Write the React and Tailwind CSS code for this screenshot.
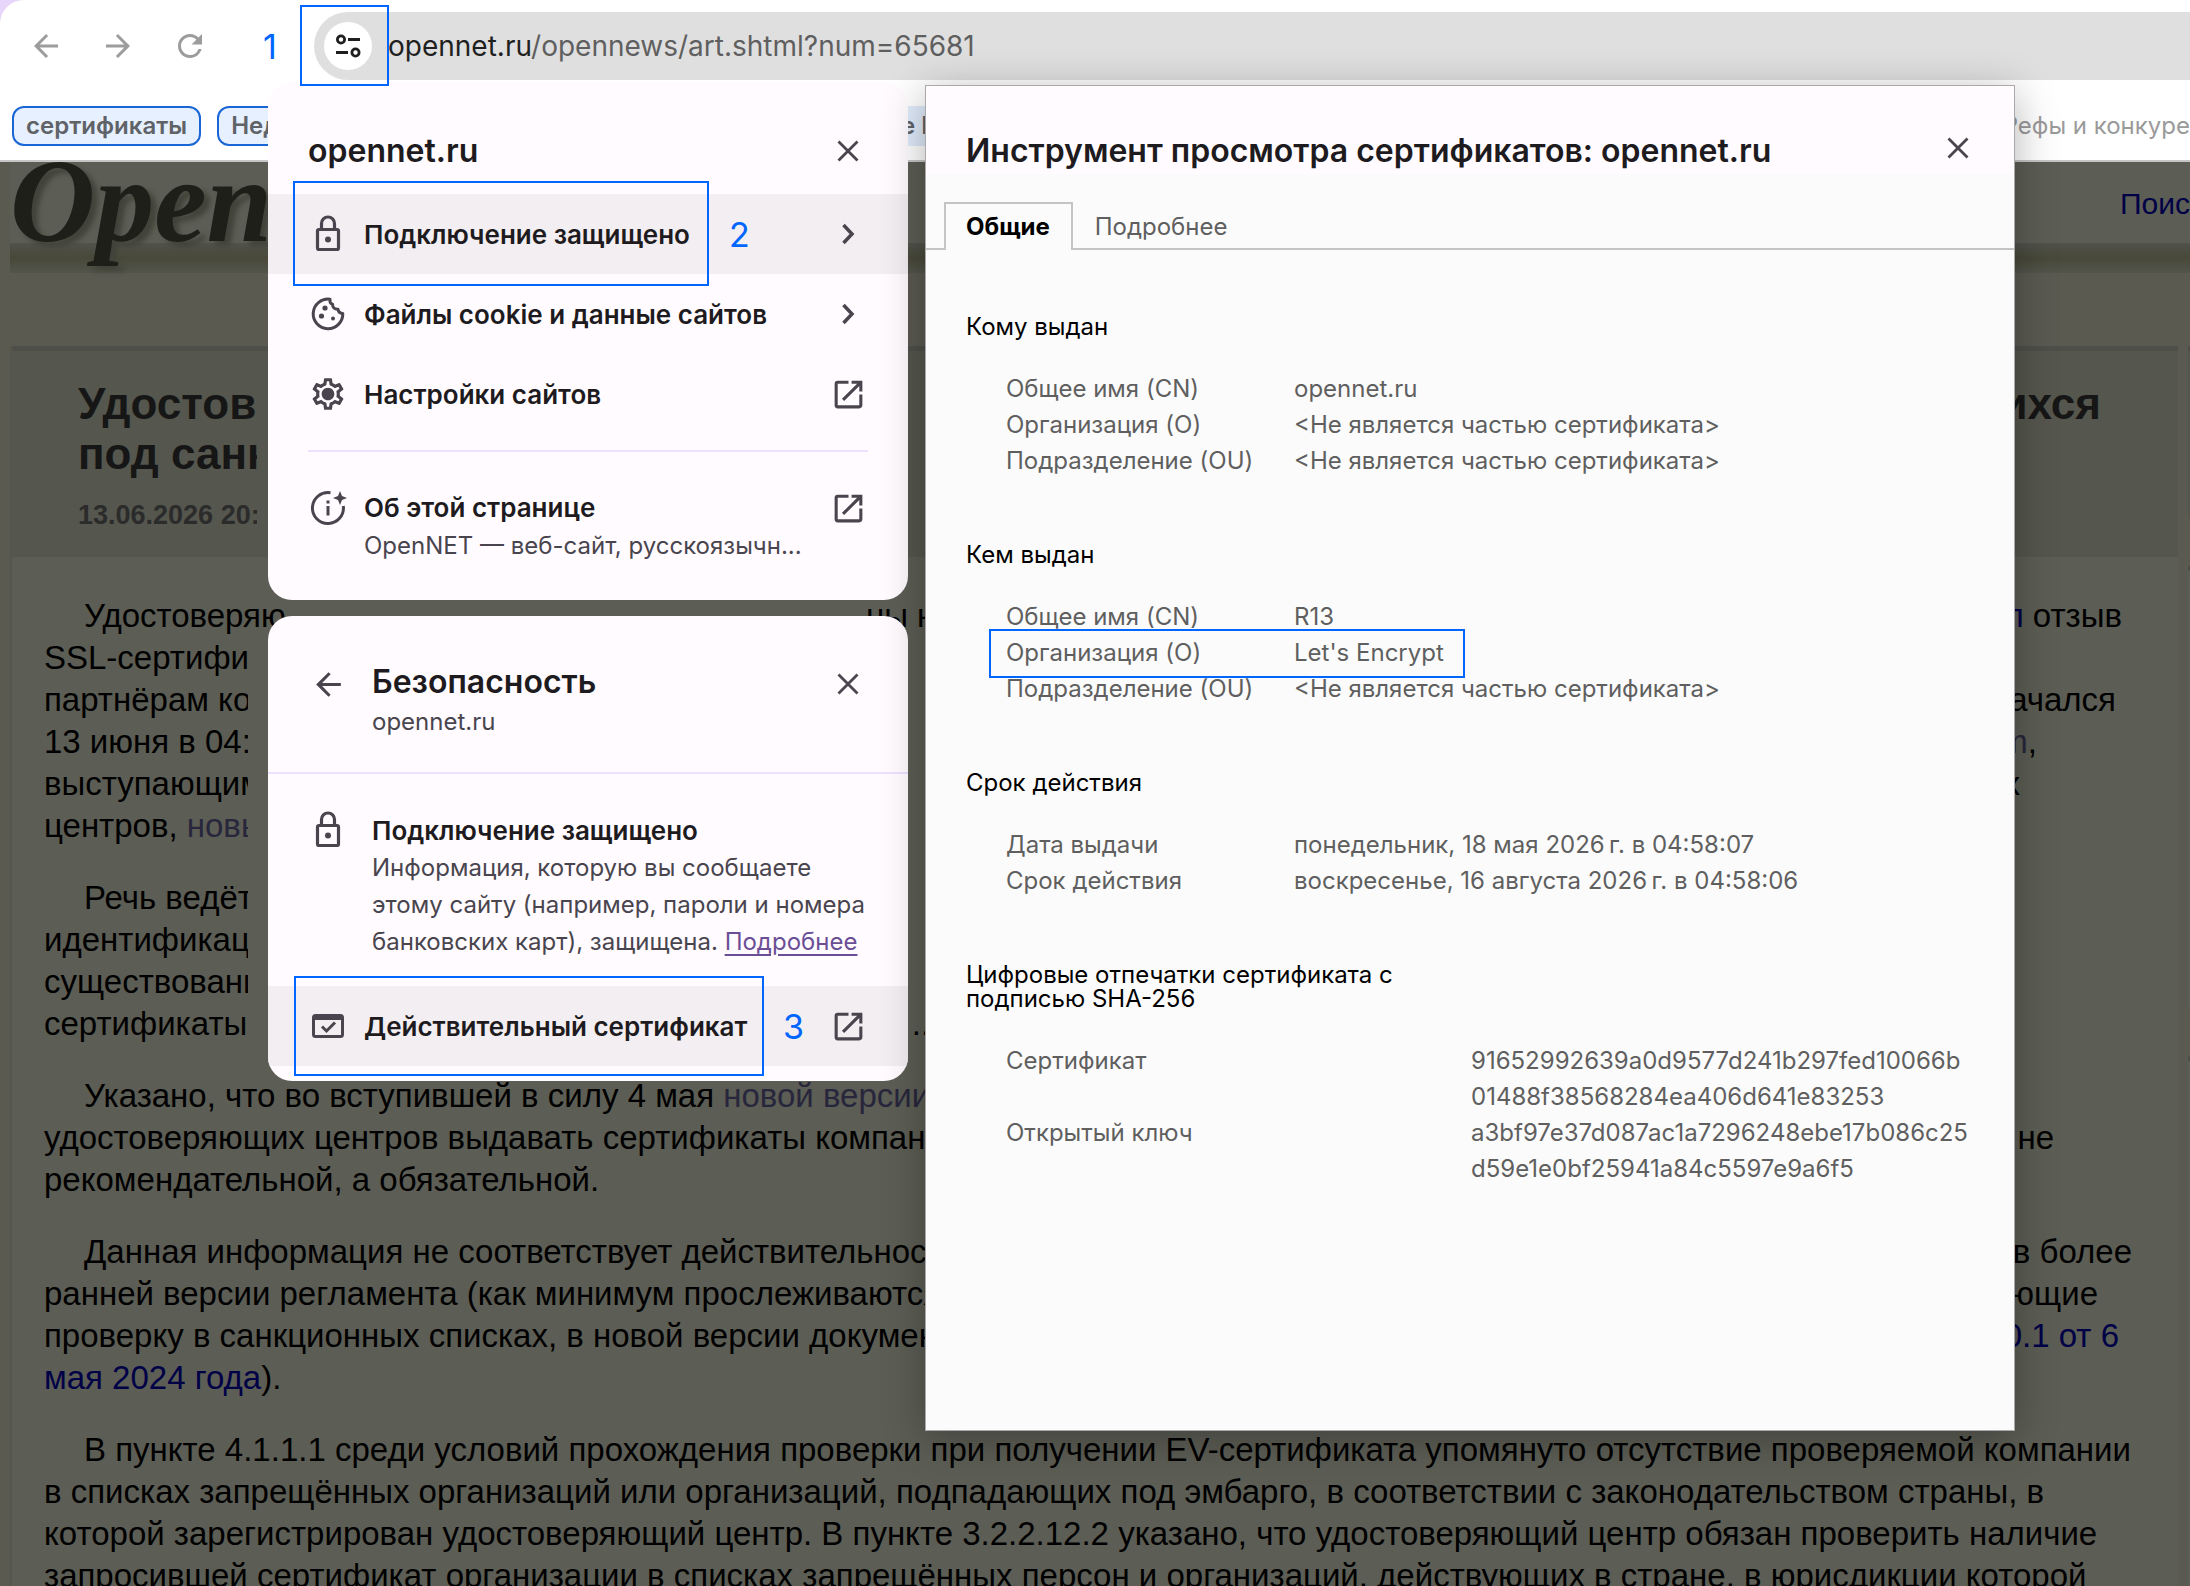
import { MdArrowBack, MdArrowForward, MdOpenInNew, MdOutlineSettings, MdRefresh } from 'react-icons/md';

const inter = "font-['Inter','Noto_Sans',sans-serif]";

const articleParagraphs = [
  [
    { left: 'Удостоверяю', mid: 'ны\u00a0н', right: [{ text: 'подтвердил', link: true }, { text: ' отзыв' }], end: 'pr-[56px]' },
    { left: 'SSL-сертифи' },
    { left: 'партнёрам ко', right: [{ text: 'начался' }], end: 'pr-[62px]' },
    { left: '13 июня в 04:', right: [{ text: 'm', visited: true }, { text: ',' }], end: 'pr-[141px]' },
    { left: 'выступающим', right: [{ text: 'их' }], end: 'pr-[158px]' },
    { left: 'центров, ', visited: 'новы' },
  ],
  [
    { left: 'Речь ведёт' },
    { left: 'идентификац' },
    { left: 'существовани' },
    { left: 'сертификаты', mid: '\u00a0\u00a0\u00a0\u00a0\u00a0...' },
  ],
  [
    { left: 'Указано, что во вступившей в силу 4 мая ', visited: 'новой версии' },
    { left: 'удостоверяющих центров выдавать сертификаты компания', right: [{ text: 'не' }], end: 'pr-[124px]' },
    { left: 'рекомендательной, а обязательной.' },
  ],
  [
    { left: 'Данная информация не соответствует действительности', right: [{ text: 'в более' }], end: 'pr-[46px]' },
    { left: 'ранней версии регламента (как минимум прослеживаются', right: [{ text: 'требующие' }], end: 'pr-[80px]' },
    { left: 'проверку в санкционных списках, в новой версии документа', right: [{ text: '2.0.1 от 6', link: true }], end: 'pr-[59px]' },
    { link: 'мая 2024 года', tail: ').' },
  ],
  [
    { left: 'В пункте 4.1.1.1 среди условий прохождения проверки при получении EV-сертификата упомянуто отсутствие проверяемой компании' },
    { left: 'в списках запрещённых организаций или организаций, подпадающих под эмбарго, в соответствии с законодательством страны, в' },
    { left: 'которой зарегистрирован удостоверяющий центр. В пункте 3.2.2.12.2 указано, что удостоверяющий центр обязан проверить наличие' },
    { left: 'запросившей сертификат организации в списках запрещённых персон и организаций, действующих в стране, в юрисдикции которой' },
  ],
];

const notPart = '<Не является частью сертификата>';

const certSections = [
  {
    title: 'Кому выдан',
    rows: [
      ['Общее имя (CN)', 'opennet.ru'],
      ['Организация (O)', notPart],
      ['Подразделение (OU)', notPart],
    ],
  },
  {
    title: 'Кем выдан',
    rows: [
      ['Общее имя (CN)', 'R13'],
      ['Организация (O)', "Let's Encrypt", true],
      ['Подразделение (OU)', notPart],
    ],
  },
  {
    title: 'Срок действия',
    rows: [
      ['Дата выдачи', 'понедельник, 18 мая 2026\u202fг. в 04:58:07'],
      ['Срок действия', 'воскресенье, 16 августа 2026\u202fг. в 04:58:06'],
    ],
  },
];

const fingerprints = [
  ['Сертификат', '91652992639a0d9577d241b297fed10066b', '01488f38568284ea406d641e83253'],
  ['Открытый ключ', 'a3bf97e37d087ac1a7296248ebe17b086c25', 'd59e1e0bf25941a84c5597e9a6f5'],
];

function CloseIcon() {
  return (
    <svg viewBox="0 0 24 24" className="size-6" fill="none" stroke="currentColor" strokeWidth="2.8" aria-hidden="true">
      <path d="M2.5 2.5l19 19M21.5 2.5l-19 19" />
    </svg>
  );
}

function LockIcon() {
  return (
    <svg viewBox="0 0 40 40" className="size-10 shrink-0" fill="none" stroke="currentColor" strokeWidth="3.2" aria-hidden="true">
      <rect x="9.5" y="15.5" width="21" height="20" rx="1.5" />
      <path d="M13.5 15V9.5a6.5 6.5 0 0 1 13 0V15" />
      <circle cx="20" cy="25.5" r="3" fill="currentColor" stroke="none" />
    </svg>
  );
}

function CookieIcon() {
  return (
    <svg viewBox="0 0 40 40" className="size-10" fill="none" stroke="currentColor" strokeWidth="3" aria-hidden="true">
      <path d="M22 5.2A14.8 14.8 0 1 0 34.8 19.5c-2.6-.3-4.5-1.9-4.8-4.3-3.6.2-5.6-1.8-5.3-4.7-2.2-.9-3.2-2.9-2.7-5.3z" strokeLinejoin="round" />
      <circle cx="17" cy="14" r="2.6" fill="currentColor" stroke="none" />
      <circle cx="13.5" cy="22" r="2.6" fill="currentColor" stroke="none" />
      <circle cx="25" cy="24.5" r="2" fill="currentColor" stroke="none" />
    </svg>
  );
}

function GearIcon() {
  return (
    <svg viewBox="0 0 40 40" className="size-10" aria-hidden="true">
      <MdOutlineSettings x="1" y="1" size={38} />
      <circle cx="20" cy="20" r="5.5" fill="currentColor" />
    </svg>
  );
}

function AboutIcon() {
  return (
    <svg viewBox="0 0 40 40" className="size-10" fill="none" stroke="currentColor" strokeWidth="3" aria-hidden="true">
      <path d="M22.5 4.7A15.5 15.5 0 1 0 35.3 18" />
      <path d="M20 18v9.5M20 12.5v3" />
      <path d="M32 3l2 5 5 2-5 2-2 5-2-5-5-2 5-2z" fill="currentColor" stroke="none" />
    </svg>
  );
}

function CertificateIcon() {
  return (
    <svg viewBox="0 0 40 40" className="size-10" fill="none" stroke="currentColor" strokeWidth="3" aria-hidden="true">
      <rect x="5.5" y="9.5" width="29" height="21" rx="2" />
      <path d="M5 11.5h30" strokeWidth="5" />
      <path d="M14 20.5l4.5 4.5 8.5-8.5" />
    </svg>
  );
}

function ChevronIcon() {
  return (
    <svg viewBox="0 0 40 40" className="size-10" fill="none" stroke="currentColor" strokeWidth="3.5" aria-hidden="true">
      <path d="M15.5 11l8.5 9-8.5 9" />
    </svg>
  );
}

function TuneIcon() {
  return (
    <svg viewBox="0 0 28 28" className="size-7" fill="none" stroke="currentColor" strokeWidth="2.8" aria-hidden="true">
      <circle cx="7" cy="7.5" r="3.6" />
      <path d="M14 7.5h12M2 20.5h12" />
      <circle cx="21.5" cy="20.5" r="3.6" />
    </svg>
  );
}

function OpenIcon() {
  return (
    <span className="flex size-10 items-center justify-center">
      <MdOpenInNew size={37} aria-hidden="true" />
    </span>
  );
}

function Toolbar() {
  return (
    <div className="flex items-start pt-3 pl-7">
      <div className="flex h-17 items-center gap-9 text-[#9c9c9c]">
        <button type="button" aria-label="Назад"><MdArrowBack size={36} /></button>
        <button type="button" aria-label="Вперёд"><MdArrowForward size={36} /></button>
        <button type="button" aria-label="Обновить"><MdRefresh size={36} /></button>
      </div>
      <span className="flex h-17 w-[106px] items-center justify-center pl-[18px] text-[34px] text-[#0066ff]">1</span>
      <div className="flex h-17 flex-1 items-center rounded-l-full bg-[#dfdfdf] pl-[10px] text-[28px]">
        <div className="relative mr-4">
          <button type="button" aria-label="Сведения о сайте" className="flex size-12 items-center justify-center rounded-full bg-white text-[#1f1f1f]">
            <TuneIcon />
          </button>
          <span className="pointer-events-none absolute -top-[17px] -left-6 z-10 h-[81px] w-[89px] border-2 border-[#0066ff]" />
        </div>
        <a href="#address" className="whitespace-nowrap text-[#5f5f5f]"><span className="text-[#1f1f1f]">opennet.ru</span>/opennews/art.shtml?num=65681</a>
      </div>
    </div>
  );
}

function Bookmarks() {
  const chip = 'flex h-10 items-center rounded-xl border-2 border-[#1a66d6] bg-[#e6f0ff] px-3';
  return (
    <div className="mt-[26px] flex items-center overflow-hidden pl-3 text-[24px] leading-7 font-semibold whitespace-nowrap text-[#5f6368]">
      <button type="button" className={chip}>сертификаты</button>
      <button type="button" className={`${chip} ml-4`}>Неделя</button>
      <span className="ml-[566px] flex h-10 w-20 items-center bg-[#e1ecfb]">е По</span>
      <span className="ml-auto font-normal text-[#9a9a9a]">Рефы и конкуре</span>
    </div>
  );
}

function ArticleLine({ line, first }) {
  return (
    <div className="grid h-[42px] grid-cols-[822px_1fr_auto] whitespace-nowrap">
      <span className={first ? 'w-0 pl-10' : 'w-0'}>
        {line.left}
        {line.visited && <a href="#rules" className="text-[#28263c]">{line.visited}</a>}
        {line.link && <a href="#version" className="text-[#000047]">{line.link}</a>}
        {line.tail}
      </span>
      <span>{line.mid}</span>
      {line.right && (
        <span className={line.end}>
          {line.right.map((part) => part.link || part.visited ? (
            <a key={part.text} href="#source" className={part.link ? 'text-[#000047]' : 'text-[#28263c]'}>{part.text}</a>
          ) : part.text)}
        </span>
      )}
    </div>
  );
}

function Site() {
  return (
    <main className="flex-1 bg-[#5b5a51] font-['Liberation_Sans',Arial,sans-serif]">
      <div className="ml-[10px] flex h-[81px] items-start justify-between bg-[#5c5d54]">
        <span className="font-['Liberation_Serif',serif] text-[118px] leading-[80px] font-bold text-[#1e1f18] italic [text-shadow:6px_5px_5px_#42433a]">Open</span>
        <a href="#search" className="pt-6 text-[30px] leading-9 text-[#000047]">Поис</a>
      </div>
      <div className="ml-[10px] h-[30px] bg-linear-to-b from-[#51524b] via-[#484939] to-[#53544b]" />

      <div className="mt-[73px] flex gap-[10px] pl-[10px]">
        <article className="min-w-0 flex-1 border-l-2 border-[#55564d] bg-[#5c5d54]">
          <header className="h-[211px] border-t-[5px] border-[#4e4f48] bg-[#55564d] pt-7 pl-[66px]">
            <h1 className="flex justify-between pr-[77px] text-[44px] leading-[50px] font-bold whitespace-nowrap text-[#161616]">
              <span>Удостов<br />под санк</span>
              <span>находящихся</span>
            </h1>
            <p className="pt-4 text-[27px] leading-10 font-bold text-[#2b2b2b]">13.06.2026 20:</p>
          </header>
          <div className="flex flex-col gap-[30px] pt-[38px] pl-[32px] text-[33px] leading-[42px] text-black">
            {articleParagraphs.map((lines, i) => (
              <div key={i}>
                {lines.map((line, j) => <ArticleLine key={j} line={line} first={j === 0} />)}
              </div>
            ))}
          </div>
        </article>
        <aside className="flex w-[2px] flex-col gap-12">
          <div className="h-[172px] border-t-[5px] border-[#4e4f48] bg-[#55564d]" />
          <div className="h-[442px] border-t-[5px] border-[#4e4f48] bg-[#5c5d54]" />
          <div className="flex-1 border-t-[5px] border-[#4e4f48] bg-[#5c5d54]" />
        </aside>
      </div>
    </main>
  );
}

function MenuRow({ icon, label, trailing, active, children }) {
  return (
    <button type="button" className={`relative flex h-20 w-full items-center gap-4 px-10 text-left ${active ? 'bg-[#f2eef1]' : ''}`}>
      {icon}
      <span className="flex-1 text-[26px] font-semibold whitespace-nowrap text-[#1e1b20]">{label}</span>
      {trailing}
      {children}
    </button>
  );
}

function SiteInfoPopup() {
  return (
    <section aria-label="opennet.ru" className="absolute top-[82px] left-[268px] h-[518px] w-[640px] overflow-hidden rounded-3xl bg-[#fffbff] text-[#49454e]">
      <div className="flex h-28 items-center justify-between pt-[25px] pr-12 pl-10">
        <h2 className="text-[32px] font-semibold text-[#1e1b20]">opennet.ru</h2>
        <button type="button" aria-label="Закрыть"><CloseIcon /></button>
      </div>
      <MenuRow icon={<LockIcon />} label="Подключение защищено" trailing={<ChevronIcon />} active>
        <span className="absolute -top-[13px] left-[25px] h-[105px] w-[416px] border-2 border-[#0066ff]" />
        <span className="absolute left-[461px] text-[34px] text-[#0066ff]">2</span>
      </MenuRow>
      <MenuRow icon={<CookieIcon />} label="Файлы cookie и данные сайтов" trailing={<ChevronIcon />} />
      <MenuRow icon={<GearIcon />} label="Настройки сайтов" trailing={<OpenIcon />} />
      <hr className="mx-10 mt-4 border-t-2 border-[#eee0ff]" />
      <button type="button" className="flex w-full items-start gap-4 px-10 pt-9 text-left">
        <AboutIcon />
        <span className="min-w-0 flex-1 whitespace-nowrap">
          <span className="block text-[26px] leading-10 font-semibold text-[#1e1b20]">Об этой странице</span>
          <span className="block text-[24px] leading-9">OpenNET — веб-сайт, русскоязычн...</span>
        </span>
        <OpenIcon />
      </button>
    </section>
  );
}

function SecurityPopup() {
  return (
    <section aria-label="Безопасность" className="absolute top-[616px] left-[268px] h-[465px] w-[640px] overflow-hidden rounded-3xl bg-[#fffbff] text-[#49454e]">
      <div className="flex h-[158px] items-start border-b-2 border-[#eee0ff] pt-11 pr-12 pl-10">
        <button type="button" aria-label="Назад" className="mt-1 mr-6 flex size-10 items-center justify-center"><MdArrowBack size={37} /></button>
        <div className="flex-1">
          <h2 className="text-[32px] leading-11 font-semibold text-[#1e1b20]">Безопасность</h2>
          <p className="text-[24px] leading-9">opennet.ru</p>
        </div>
        <button type="button" aria-label="Закрыть" className="mt-3"><CloseIcon /></button>
      </div>
      <div className="flex gap-6 px-10 pt-9 pb-[26px]">
        <LockIcon />
        <div className="pt-[3px] whitespace-nowrap">
          <h3 className="text-[26px] leading-9 font-semibold text-[#1e1b20]">Подключение защищено</h3>
          <p className="text-[24px] leading-[37px]">
            Информация, которую вы сообщаете<br />
            этому сайту (например, пароли и номера<br />
            банковских карт), защищена. <a href="#more" className="text-[#6b4f96] underline underline-offset-4">Подробнее</a>
          </p>
        </div>
      </div>
      <MenuRow icon={<CertificateIcon />} label="Действительный сертификат" trailing={<OpenIcon />} active>
        <span className="absolute -top-[10px] left-[26px] h-[100px] w-[470px] border-2 border-[#0066ff]" />
        <span className="absolute left-[515px] text-[34px] text-[#0066ff]">3</span>
      </MenuRow>
    </section>
  );
}

function CertificateDialog() {
  return (
    <section role="dialog" aria-labelledby="cert-title" className="absolute top-[85px] left-[925px] h-[1346px] w-[1090px] border border-[#aaa8aa] bg-[#fbfbfb] text-[24px] text-[#5f5f5f] shadow-[0_8px_40px_rgba(0,0,0,0.3)]">
      <div className="flex h-[88px] items-center justify-between bg-[#fffbff] pt-[42px] pr-11 pl-10">
        <h2 id="cert-title" className="text-[32px] leading-10 font-semibold whitespace-nowrap text-[#1e1b20]">Инструмент просмотра сертификатов: opennet.ru</h2>
        <button type="button" aria-label="Закрыть" className="pb-[6px] text-[#49454e]"><CloseIcon /></button>
      </div>
      <div role="tablist" className="mt-7 flex h-12 items-stretch">
        <span className="w-[18px] border-b-2 border-[#c4c4c4]" />
        <button type="button" role="tab" aria-selected="true" className="border-2 border-b-0 border-[#c4c4c4] pr-[21px] pl-5 font-bold text-black">Общие</button>
        <button type="button" role="tab" aria-selected="false" className="border-b-2 border-[#c4c4c4] px-[22px] pt-1">Подробнее</button>
        <span className="flex-1 border-b-2 border-[#c4c4c4]" />
      </div>
      <div className="flex flex-col gap-16 pt-[65px] pl-10">
        {certSections.map((section) => (
          <section key={section.title}>
            <h3 className="leading-6 text-black">{section.title}</h3>
            <dl className="pt-8 pl-10 leading-9">
              {section.rows.map(([name, value, marked]) => (
                <div key={name} className="relative grid grid-cols-[288px_1fr] whitespace-nowrap">
                  <dt>{name}</dt>
                  <dd>{value}</dd>
                  {marked && <span className="absolute -top-[6px] -left-[17px] h-[49px] w-[476px] border-2 border-[#0066ff]" />}
                </div>
              ))}
            </dl>
          </section>
        ))}
        <section>
          <h3 className="leading-6 text-black">Цифровые отпечатки сертификата с<br />подписью SHA-256</h3>
          <dl className="pt-8 pl-10 leading-9">
            {fingerprints.map(([name, first, second]) => (
              <div key={name} className="grid grid-cols-[465px_1fr]">
                <dt>{name}</dt>
                <dd>{first}<br />{second}</dd>
              </div>
            ))}
          </dl>
        </section>
      </div>
    </section>
  );
}

export default function App() {
  return (
    <div className={`relative flex h-screen flex-col overflow-hidden bg-[#e8d5fa] ${inter}`}>
      <header className="h-[162px] shrink-0 rounded-tl-3xl border-b-2 border-[#c6c6c6] bg-white">
        <Toolbar />
        <Bookmarks />
      </header>
      <Site />
      {/* blank strips beside the popups */}
      <div className="absolute top-[352px] left-[257px] h-[200px] w-3 bg-[#55564d]" />
      <div className="absolute top-[634px] left-[248px] h-[416px] w-6 bg-[#5c5d54]" />
      <SiteInfoPopup />
      <SecurityPopup />
      <CertificateDialog />
    </div>
  );
}
